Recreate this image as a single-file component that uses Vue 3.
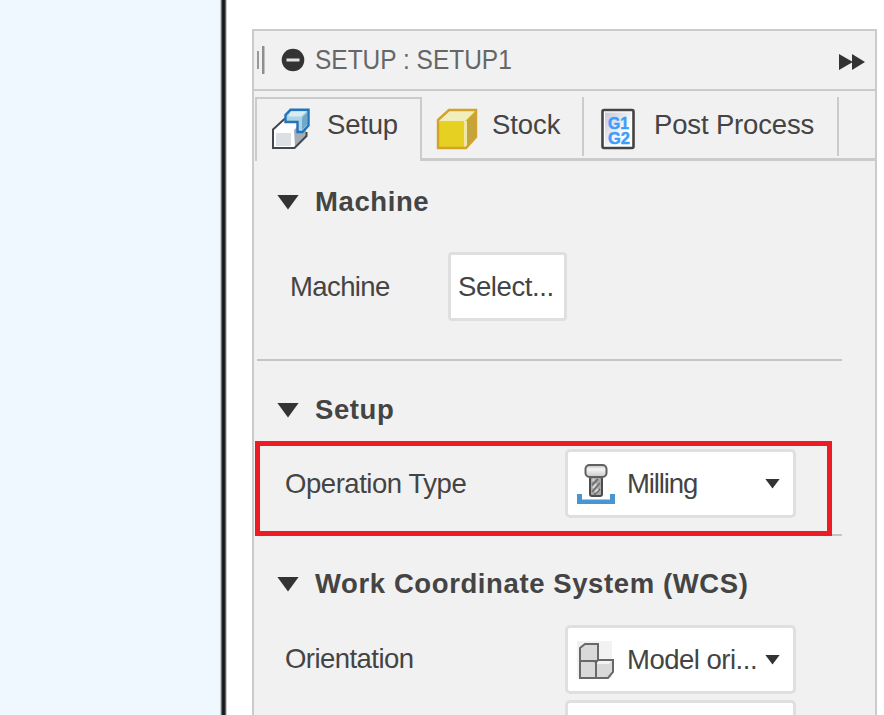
<script setup>
</script>

<template>
  <div class="screen">
    <div class="canvas"></div>
    <section class="panel">
      <header class="header">
        <svg class="grip" width="10" height="30" viewBox="0 0 10 30">
          <rect x="1" y="6" width="2" height="18" fill="#999" />
          <rect x="6" y="1" width="2.5" height="28" fill="#8e8e8e" />
        </svg>
        <svg class="minus" width="24" height="24" viewBox="0 0 24 24">
          <circle cx="12" cy="12" r="11.3" fill="#333" />
          <rect x="5.5" y="10.500" width="13" height="3" fill="#e2e2e2" />
        </svg>
        <h1 class="title">SETUP : SETUP1</h1>
        <svg class="forward" width="26" height="16" viewBox="0 0 26 16">
          <path d="M0 0L13 7.5V0L26 8L13 16V8.5L0 16Z" fill="#333" />
        </svg>
      </header>

      <nav class="tabs">
        <div class="tab active">
          <svg width="40" height="42" viewBox="0 0 40 42">
            <path d="M2 20L13 10H26L35 18V28L24 40H2Z" fill="#fff" />
            <path d="M23 22L28 17L35 20V28L24 39Z" fill="#a6adb8" />
            <path d="M5 25H20V38H5Z" fill="#dcdfe4" />
            <path d="M14 10.500L2 21.500V40H23.500L35.500 28V24" fill="none" stroke="#414750" stroke-width="2" />
            <path d="M19.500 1.800H37.500V17.500L31.500 24H26.500V14H14.500V7Z" fill="#a9d5e4" stroke="#2673b9" stroke-width="2.400" />
            <path d="M20 3.500H35L30 8.500H17Z" fill="#d8edf3" />
            <path d="M31 9.500L36 4.500V16.500L31 22Z" fill="#6fa9c8" />
          </svg>
          <span class="tab-text">Setup</span>
        </div>
        <div class="tab stock">
          <svg width="42" height="42" viewBox="0 0 42 42">
            <path d="M2 12L13 2H40V29L30 40H2Z" fill="#e6d021" />
            <path d="M3 12L13 3H39L29 13H3Z" fill="#f2edbd" />
            <path d="M30 13L39 4V29L30 39Z" fill="#c4a43b" />
            <path d="M28 13H31V39H28Z" fill="#f0e6a5" />
            <path d="M2 12L13 2H40V29L30 40H2Z" fill="none" stroke="#d3a22b" stroke-width="2.400" />
          </svg>
          <span class="tab-text">Stock</span>
        </div>
        <div class="tab post">
          <svg width="34" height="42" viewBox="0 0 34 42">
            <defs>
              <linearGradient id="page" x1="0" y1="0" x2="1" y2="1">
                <stop offset="0" stop-color="#c5c8d4" />
                <stop offset=".7" stop-color="#fff" />
              </linearGradient>
            </defs>
            <rect x="1.500" y="2" width="31" height="38" rx="1.500" fill="#fff" stroke="#444" stroke-width="2.600" />
            <rect x="4" y="4.500" width="26" height="33" fill="url(#page)" />
            <text x="7" y="20.500" class="gcode" textLength="21" lengthAdjust="spacingAndGlyphs">G1</text>
            <text x="7" y="35.800" class="gcode" textLength="22" lengthAdjust="spacingAndGlyphs">G2</text>
          </svg>
          <span class="tab-text">Post Process</span>
        </div>
        <div class="tab rest"></div>
      </nav>

      <div class="section machine">
        <h2><i class="caret"></i><span class="h-machine">Machine</span></h2>
        <div class="row">
          <label class="l-machine">Machine</label>
          <button class="select-btn">Select...</button>
        </div>
      </div>

      <div class="section setup">
        <h2><i class="caret"></i><span class="h-setup">Setup</span></h2>
        <div class="row">
          <label class="l-op">Operation Type</label>
          <div class="dropdown">
            <svg width="40" height="42" viewBox="0 0 40 42">
              <defs>
                <linearGradient id="head" x1="0" y1="0" x2="0" y2="1">
                  <stop offset="0" stop-color="#bbb" />
                  <stop offset=".35" stop-color="#f5f5f5" />
                  <stop offset="1" stop-color="#c8c8c8" />
                </linearGradient>
              </defs>
              <rect x="14" y="14" width="12" height="19" rx="2" fill="#aaa" stroke="#4c4c4c" stroke-width="2" />
              <path d="M16 22L22 16M16 29L24 20M18 32L24 26" stroke="#707070" stroke-width="1.800" />
              <path d="M17 18L18 16M17 25L20 21M19 29L22 26" stroke="#d8d8d8" stroke-width="1.800" />
              <rect x="9.500" y="2" width="21" height="12" rx="4" fill="url(#head)" stroke="#606060" stroke-width="2" />
              <path d="M1 31H6V36.500H34V31H39V41H1Z" fill="#4995d1" />
            </svg>
            <span class="v-mill">Milling</span>
            <i class="arrow"></i>
          </div>
        </div>
        <div class="highlight"></div>
      </div>

      <div class="section wcs">
        <h2><i class="caret"></i><span class="h-wcs">Work Coordinate System (WCS)</span></h2>
        <div class="row">
          <label class="l-or">Orientation</label>
          <div class="stack">
            <div class="dropdown">
              <svg width="40" height="42" viewBox="0 0 40 42">
                <rect x="1" y="2" width="35" height="37" fill="#f2f2f2" />
                <path d="M4 9L9 5H22V21H37V33L32 39H4Z" fill="#d9d9d9" />
                <path d="M22 21H37L33 25H21Z" fill="#f3f3f3" />
                <path d="M4 9L9 5H22V21H37V33L32 39H4ZM4 22H20M20 21V39M22 21L19 24" fill="none" stroke="#686868" stroke-width="2" />
              </svg>
              <span class="v-ori">Model ori...</span>
              <i class="arrow"></i>
            </div>
            <div class="dropdown"></div>
          </div>
        </div>
      </div>
    </section>
  </div>
</template>

<style>
body { margin: 0; background: #fff; overflow: hidden; }
</style>

<style scoped>
* { box-sizing: border-box; }
.screen {
  display: flex;
  width: 884px;
  height: 715px;
  overflow: hidden;
  background: #fff;
  color: #444;
  font: 27.5px/32px "Liberation Sans", Arial, sans-serif;
  white-space: nowrap;
}
.canvas {
  flex: none;
  width: 227px;
  background: linear-gradient(90deg, #f0f8ff 220px, #9da3a8 221px, #33373a 222px, #101214 223px, #25282a 225px, #999 226px, #fff 227px);
}
.panel {
  flex: none;
  width: 625px;
  height: 720px;
  margin: 29px 0 0 25px;
  border: 2px solid #cbcbcb;
  background: #f1f1f1;
}
svg { flex: none; display: block; }
.header {
  display: flex;
  align-items: center;
  height: 60px;
  padding: 0 10px 0 2px;
  border-bottom: 2px solid #cbcbcb;
}
.minus { margin-left: 15px; }
.title {
  margin: 0 0 0 10px;
  font: inherit;
  color: #666;
  transform: scaleX(.89);
  transform-origin: left;
}
.forward { margin: 3px 0 0 auto; }
.tabs {
  display: flex;
  height: 71px;
  padding: 6px 0 0 1px;
}
.tab {
  display: flex;
  align-items: flex-start;
  height: 64px;
  padding-top: 11px;
  border-bottom: 3px solid #cbcbcb;
  position: relative;
}
.active {
  width: 167px;
  padding: 9px 0 0 14px;
  border: 2px solid #cbcbcb;
  border-bottom: 0;
}
.stock { width: 162px; padding-left: 14px; }
.post { width: 255px; padding-left: 17px; }
.rest { flex: 1; }
.stock::after, .post::after {
  content: "";
  position: absolute;
  right: 0;
  top: 0;
  width: 2px;
  height: 59px;
  background: #cbcbcb;
}
.tab-text { margin-top: 1px; }
.active .tab-text { margin-left: 16px; letter-spacing: -.2px; }
.stock .tab-text { margin-left: 14px; letter-spacing: -.1px; }
.post .tab-text { margin-left: 19px; letter-spacing: -.15px; }
.gcode { font: bold 16.500px "Liberation Sans", sans-serif; fill: #3e9dfa; stroke: #3e9dfa; stroke-width: .5px; }
.section {
  position: relative;
  width: 585px;
  margin-left: 3px;
}
.machine { height: 199px; padding-top: 24px; border-bottom: 2px solid #c5c5c5; }
.setup { height: 175px; padding-top: 33px; border-bottom: 2px solid #c5c5c5; }
.wcs { padding-top: 32px; }
h2 {
  display: flex;
  align-items: center;
  height: 32px;
  margin: 0;
  padding-left: 20px;
  font: inherit;
  font-weight: bold;
}
.caret {
  flex: none;
  width: 22px;
  height: 15px;
  margin-right: 16px;
  background: #333;
  clip-path: polygon(0 0, 100% 0, 50% 100%);
}
.row { display: flex; align-items: center; }
.machine .row { height: 69px; margin-top: 34px; }
.setup .row { height: 69px; margin-top: 23px; }
.wcs .row { align-items: flex-start; margin-top: 25px; }
label { flex: none; }
.l-machine { width: 191px; padding-left: 33px; }
.l-op, .l-or { width: 308px; padding-left: 28px; }
.l-or { margin-top: 18px; }
.select-btn {
  width: 119px;
  height: 69px;
  margin: 0;
  padding: 0 0 0 7px;
  border: 3px solid #dfdfdf;
  border-radius: 4px;
  background: #fff;
  font: inherit;
  color: inherit;
  text-align: left;
}
.stack { display: flex; flex-direction: column; gap: 6px; }
.dropdown {
  display: flex;
  align-items: center;
  width: 231px;
  height: 69px;
  padding: 0 13px 0 8px;
  border: 3px solid #dfdfdf;
  border-radius: 5px;
  background: #fff;
}
.dropdown span { margin-left: 11px; }
.arrow {
  width: 15px;
  height: 10px;
  margin-left: auto;
  background: #333;
  clip-path: polygon(0 0, 100% 0, 50% 100%);
}
.highlight {
  position: absolute;
  left: -2px;
  bottom: -2px;
  width: 577px;
  height: 95px;
  border: 5px solid #ed1c24;
}
.l-machine { letter-spacing: -.6px; }
.l-op { letter-spacing: -.45px; }
.l-or { letter-spacing: -.55px; }
.select-btn { letter-spacing: -.4px; }
.v-mill { letter-spacing: -1.1px; }
.v-ori { letter-spacing: -.5px; }
.h-machine, .h-setup, .h-wcs { letter-spacing: .6px; }
</style>
